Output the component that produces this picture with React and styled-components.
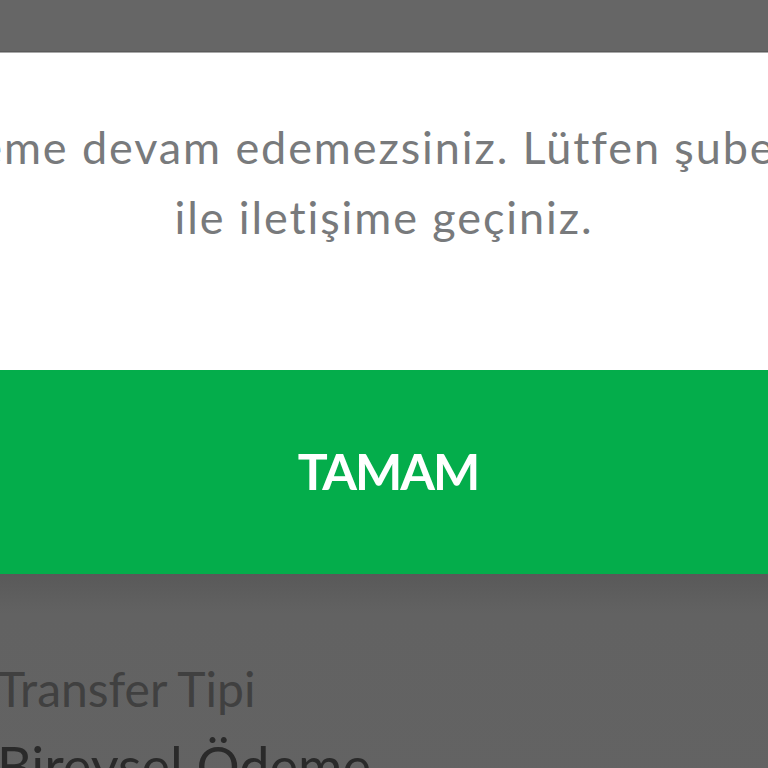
import React from "react";
import styled, { createGlobalStyle } from "styled-components";

const Global = createGlobalStyle`
  html, body { margin: 0; padding: 0; background: #626262; }
  body { font-family: "Lato", "Noto Sans", sans-serif; }
  * { box-sizing: border-box; }
`;

const Screen = styled.div`
  width: 768px;
  height: 768px;
  overflow: hidden;
  display: flex;
  flex-direction: column;
  background: #626262;
`;

const TopBar = styled.div`
  flex: 0 0 52px;
  background: #666666;
  border-bottom: 1px solid #5a5a5a;
  box-shadow: 0 1px 0 #a9a9a9;
  position: relative;
  z-index: 1;
`;

const DialogStrip = styled.div`
  flex: 0 0 auto;
  display: flex;
  justify-content: center;
  width: 768px;
  overflow: hidden;
`;

const Dialog = styled.div`
  flex: 0 0 1000px;
  display: flex;
  flex-direction: column;
`;

const Body = styled.div`
  height: 318px;
  background: #ffffff;
  padding-top: 60px;
  display: flex;
  flex-direction: column;
  align-items: center;
`;

const Message = styled.p`
  margin: 0;
  text-align: center;
  font-family: "Lato", sans-serif;
  font-weight: 400;
  font-size: 45px;
  line-height: 70px;
  letter-spacing: 1.9px;
  color: #787a7c;
  white-space: nowrap;
`;

const OkButton = styled.button`
  height: 204px;
  border: none;
  background: #04ad4b;
  color: #ffffff;
  font-family: "Lato", sans-serif;
  font-weight: 700;
  font-size: 50px;
  letter-spacing: -2px;
  display: flex;
  align-items: center;
  justify-content: center;
  padding: 0 0 2px 8px;
`;

const Page = styled.div`
  flex: 1;
  background: linear-gradient(#595959, #626262 40px, #636363);
  padding-top: 86px;
  margin-left: -3px;
  display: flex;
  flex-direction: column;
`;

const FieldLabel = styled.div`
  font-family: "Lato", sans-serif;
  font-size: 48px;
  line-height: 58px;
  color: #404040;
  white-space: nowrap;
`;

const FieldValue = styled.div`
  font-family: "Lato", sans-serif;
  font-size: 54px;
  line-height: 64px;
  color: #2a2a2a;
  white-space: nowrap;
  margin-top: 16px;
`;

export default function App() {
  return (
    <>
      <Global />
      <Screen>
        <TopBar />
        <DialogStrip>
          <Dialog>
            <Body>
              <Message>
                İşleme devam edemezsiniz. Lütfen şubeniz
                <br />
                ile iletişime geçiniz.
              </Message>
            </Body>
            <OkButton>TAMAM</OkButton>
          </Dialog>
        </DialogStrip>
        <Page>
          <FieldLabel>Transfer Tipi</FieldLabel>
          <FieldValue>Bireysel Ödeme</FieldValue>
        </Page>
      </Screen>
    </>
  );
}
